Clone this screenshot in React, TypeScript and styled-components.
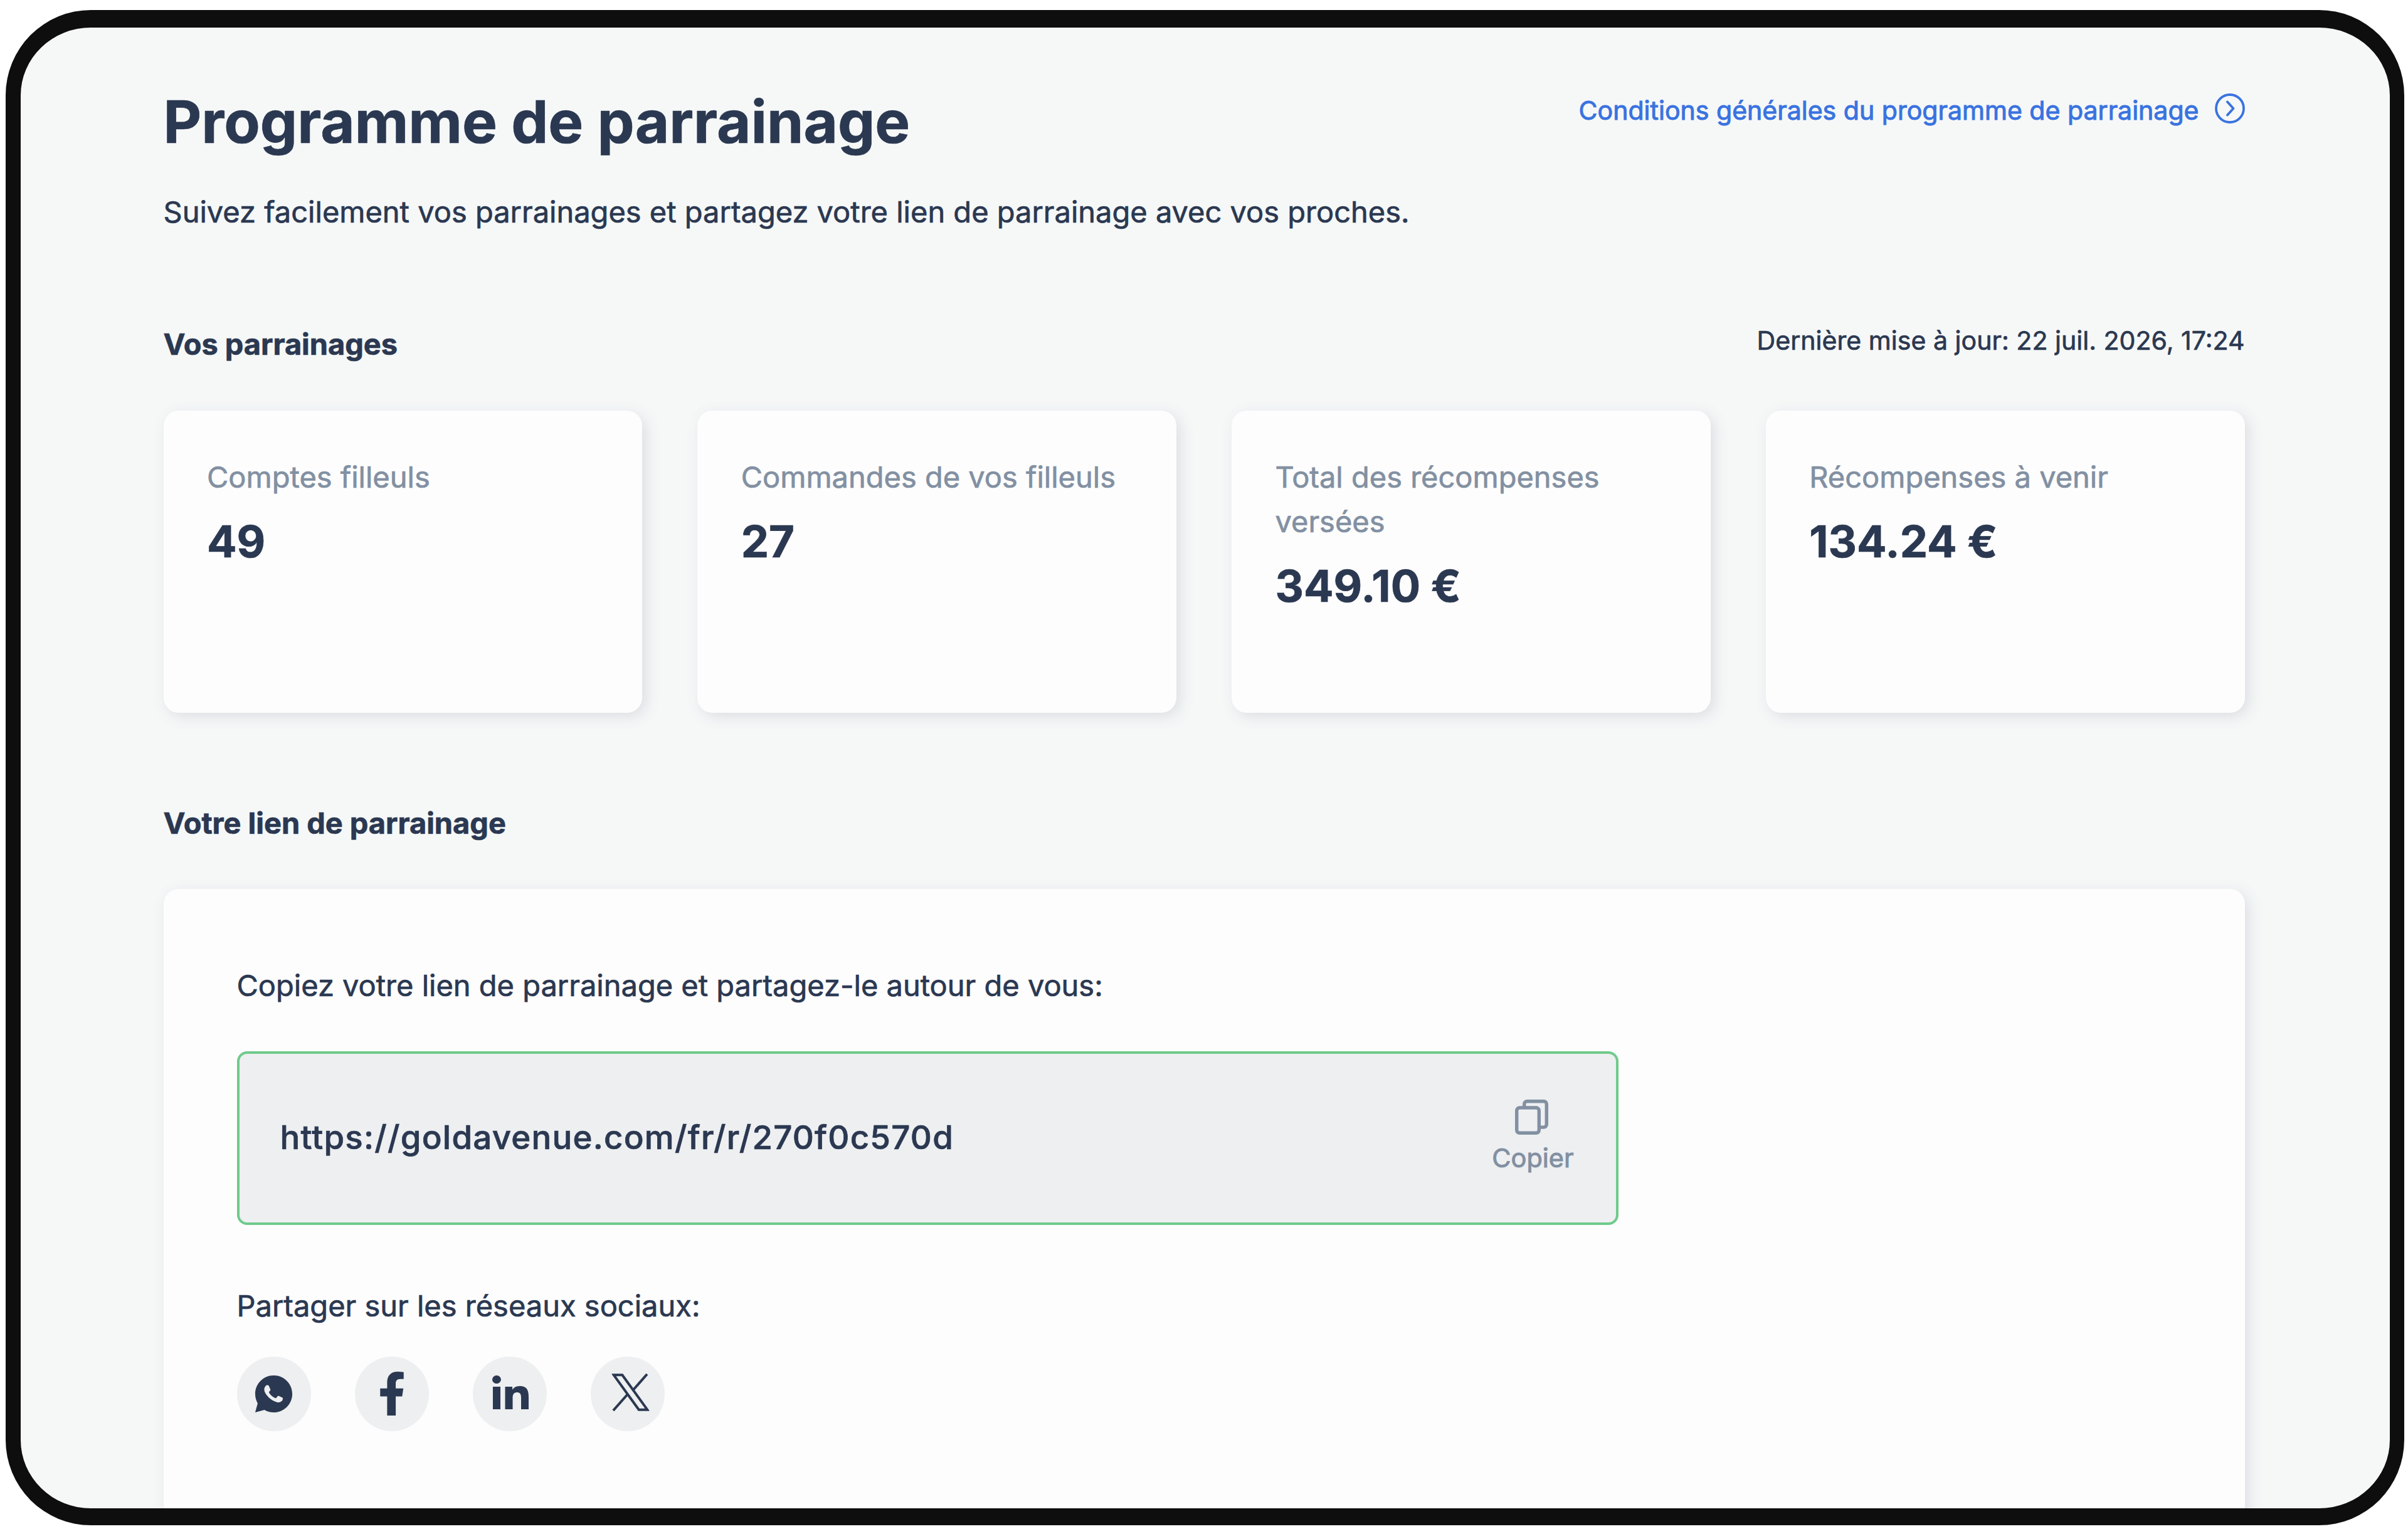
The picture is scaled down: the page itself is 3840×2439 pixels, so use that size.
import styled, { createGlobalStyle } from "styled-components"
import { FaFacebookF } from "react-icons/fa"
import { RiWhatsappFill } from "react-icons/ri"

const GlobalStyle = createGlobalStyle`
  * {
    box-sizing: border-box;
  }
  body {
    margin: 0;
    background: #ffffff;
    font-family: Inter, "Liberation Sans", sans-serif;
    color: #2b3851;
    -webkit-text-stroke: 0.7px currentColor;
  }
  h1, h2, p {
    margin: 0;
  }
`

const Screen = styled.div`
  width: 3840px;
  height: 2439px;
  padding: 16px 6px 6px 9px;
  overflow: hidden;
`

const Frame = styled.div`
  width: 100%;
  height: 100%;
  border: solid #0e0e0e;
  border-width: 28px 23px 27px 24px;
  border-radius: 136px;
  background: #f6f8f8;
  overflow: hidden;
`

const Page = styled.main`
  width: 3319px;
  margin-left: 227.5px;
  padding-top: 90.5px;
`

const Header = styled.header`
  display: flex;
  justify-content: space-between;
  align-items: flex-start;
`

const Title = styled.h1`
  font-size: 93.9px;
  line-height: 118px;
  font-weight: 700;
`

const TermsLink = styled.a`
  display: flex;
  align-items: flex-start;
  gap: 25px;
  margin-top: 13px;
  font-size: 41.05px;
  line-height: 57px;
  color: #3a73e0;
  text-decoration: none;
  -webkit-text-stroke-width: 1px;

  svg {
    width: 48px;
    height: 48px;
    margin-top: 1.5px;
  }
`

const Text = styled.p`
  font-size: 47px;
  line-height: 70.4px;
`

const Intro = styled(Text)`
  margin-top: 50px;
`

const SectionHead = styled.div<{ $top: number }>`
  display: flex;
  justify-content: space-between;
  align-items: flex-start;
  margin-top: ${(p) => p.$top}px;
`

const SectionTitle = styled.h2`
  font-size: 46.9px;
  line-height: 70.4px;
  font-weight: 700;
`

const Updated = styled.span`
  font-size: 41.1px;
  line-height: 58.5px;
`

const Cards = styled.div`
  display: grid;
  grid-template-columns: repeat(4, 1fr);
  gap: 88px;
  margin-top: 70px;
`

const Surface = styled.div`
  background: #fdfdfd;
  border-radius: 24px;
  box-shadow: 6px 6px 24px rgba(44, 55, 85, 0.13);
`

const Card = styled(Surface)`
  height: 482px;
  padding: 71.4px 69.5px;
`

const CardLabel = styled(Text)`
  color: #8290a2;
`

const CardValue = styled.p`
  margin-top: 23.8px;
  font-size: 70.4px;
  line-height: 88px;
  font-weight: 700;
`

const Panel = styled(Surface)`
  height: 1200px;
  margin-top: 69.8px;
  padding: 118.7px 117px;
`

const LinkBox = styled.div`
  display: flex;
  align-items: center;
  justify-content: space-between;
  width: 2203px;
  height: 277px;
  margin-top: 70px;
  padding: 0 67px 2px 65px;
  border: 4px solid #6fca8b;
  border-radius: 16px;
  background: #edeff1;
`

const Url = styled.span`
  margin-top: -2px;
  font-size: 52.8px;
  font-weight: 500;
  letter-spacing: 0.0235em;
`

const CopyButton = styled.button`
  display: flex;
  flex-direction: column;
  align-items: center;
  gap: 8.5px;
  padding: 1px 0 0;
  border: none;
  background: none;
  font-family: inherit;
  font-size: 41.4px;
  line-height: 57px;
  color: #8290a2;
  -webkit-text-stroke-width: 1px;

  svg {
    width: 53px;
    height: 56px;
    margin-right: 4px;
  }
`

const ShareLabel = styled(Text)`
  margin-top: 93.5px;
`

const Socials = styled.div`
  display: flex;
  gap: 70px;
  margin-top: 45.5px;
`

const Social = styled.a<{ $dx?: number; $dy?: number }>`
  display: flex;
  align-items: center;
  justify-content: center;
  width: 118px;
  height: 119px;
  border-radius: 50%;
  background: #edeff0;

  svg {
    transform: translate(${(p) => p.$dx || 0}px, ${(p) => p.$dy || 0}px);
  }
`

const ChevronCircle = () => (
  <svg viewBox="0 0 48 48" fill="none" stroke="currentColor" strokeWidth="3.8" strokeLinecap="round" strokeLinejoin="round">
    <circle cx="24" cy="24" r="22" />
    <path d="M20 13.5L29.5 24L20 34.5" />
  </svg>
)

const CopyIcon = () => (
  <svg viewBox="0 0 53 56" fill="none" stroke="currentColor" strokeWidth="5.4">
    <rect x="2.7" y="13" width="35.6" height="40.3" rx="4.5" />
    <path d="M14.7 11V7.2a4.5 4.5 0 0 1 4.5-4.5h26.6a4.5 4.5 0 0 1 4.5 4.5v32.4a4.5 4.5 0 0 1-4.5 4.5H41" />
  </svg>
)

const LinkedinIcon = () => (
  <svg width="58" height="54" viewBox="0 0 448 448" preserveAspectRatio="none" fill="currentColor">
    <path d="M100.28 448H7.4V148.9h92.88zM53.79 108.1C24.09 108.1 0 83.5 0 53.8a53.79 53.79 0 0 1 107.58 0c0 29.7-24.1 54.3-53.79 54.3zM447.9 448h-92.68V302.4c0-34.7-.7-79.2-48.29-79.2-48.29 0-55.69 37.7-55.69 76.7V448h-92.78V148.9h89.08v40.8h1.3c12.4-23.5 42.69-48.3 87.88-48.3 94 0 111.28 61.9 111.28 142.3V448z" />
  </svg>
)

const XIcon = () => (
  <svg width="60" height="60" viewBox="0 0 60 60" fill="none" stroke="currentColor" strokeWidth="4">
    <path d="M3.2 2.3H16.8L56.8 57.7H43.2Z" />
    <path d="M56.4 1L34 26.5M2.4 59L25.4 33" />
  </svg>
)

const stats = [
  { label: "Comptes filleuls", value: "49" },
  { label: "Commandes de vos filleuls", value: "27" },
  { label: "Total des récompenses versées", value: "349.10 €" },
  { label: "Récompenses à venir", value: "134.24 €" },
]

function App() {
  return (
    <>
      <GlobalStyle />
      <Screen>
        <Frame>
          <Page>
            <Header>
              <Title>Programme de parrainage</Title>
              <TermsLink>
                Conditions générales du programme de parrainage
                <ChevronCircle />
              </TermsLink>
            </Header>
            <Intro>
              Suivez facilement vos parrainages et partagez votre lien de parrainage avec vos proches.
            </Intro>

            <SectionHead $top={141.5}>
              <SectionTitle>Vos parrainages</SectionTitle>
              <Updated>Dernière mise à jour: 22 juil. 2026, 17:24</Updated>
            </SectionHead>
            <Cards>
              {stats.map((s) => (
                <Card key={s.label}>
                  <CardLabel>{s.label}</CardLabel>
                  <CardValue>{s.value}</CardValue>
                </Card>
              ))}
            </Cards>

            <SectionHead $top={141}>
              <SectionTitle>Votre lien de parrainage</SectionTitle>
            </SectionHead>
            <Panel>
              <Text>Copiez votre lien de parrainage et partagez-le autour de vous:</Text>
              <LinkBox>
                <Url>https://goldavenue.com/fr/r/270f0c570d</Url>
                <CopyButton>
                  <CopyIcon />
                  Copier
                </CopyButton>
              </LinkBox>
              <ShareLabel>Partager sur les réseaux sociaux:</ShareLabel>
              <Socials>
                <Social>
                  <RiWhatsappFill size={71} />
                </Social>
                <Social>
                  <FaFacebookF size={70} />
                </Social>
                <Social $dx={1} $dy={-2}>
                  <LinkedinIcon />
                </Social>
                <Social $dx={4.5} $dy={-2}>
                  <XIcon />
                </Social>
              </Socials>
            </Panel>
          </Page>
        </Frame>
      </Screen>
    </>
  )
}

export default App
